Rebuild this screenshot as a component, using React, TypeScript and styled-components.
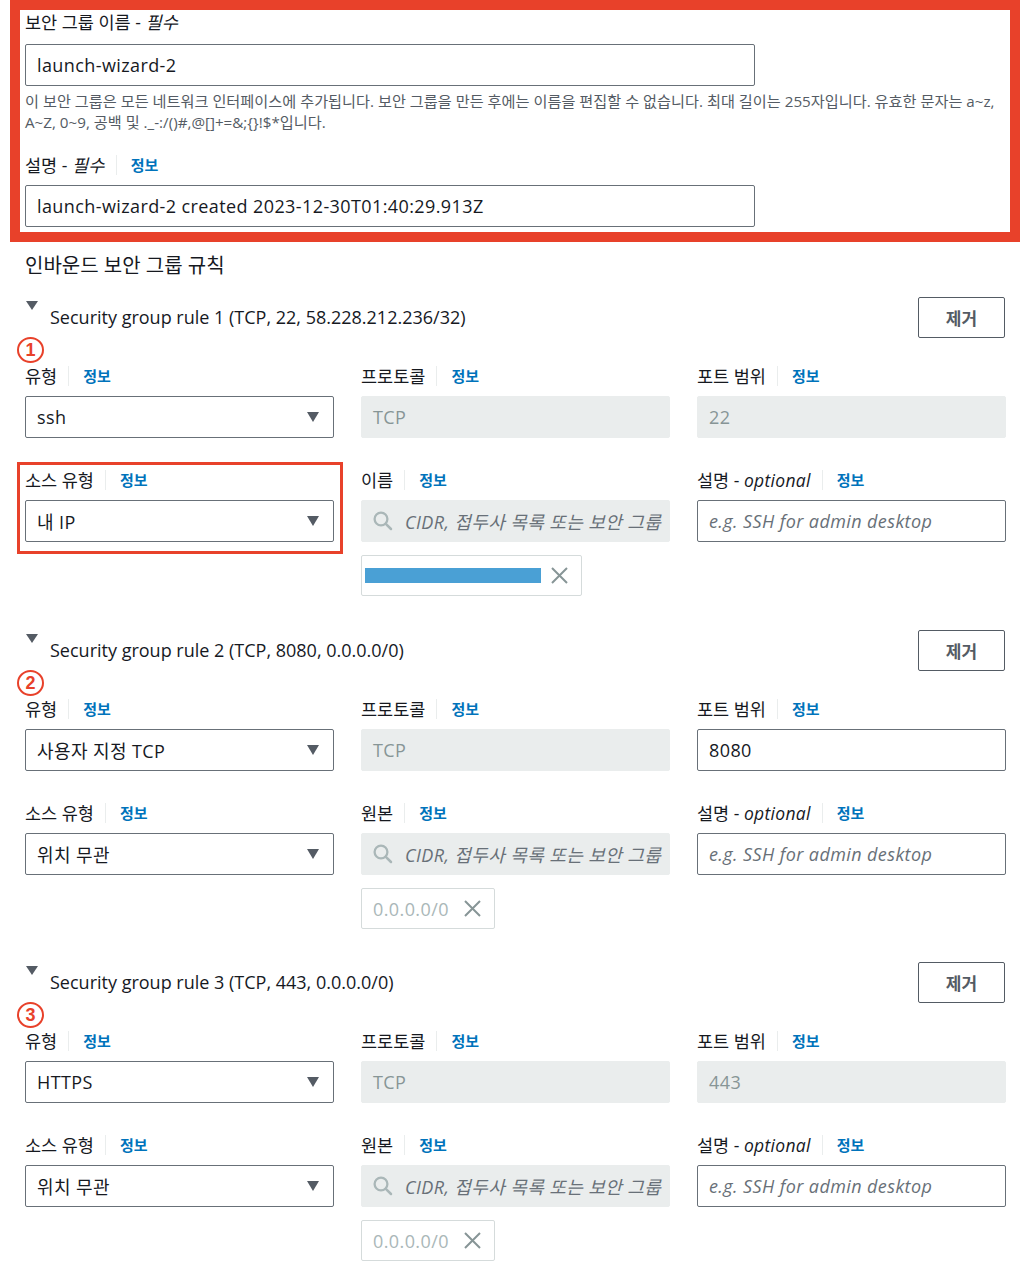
import React from "react";
import styled, { createGlobalStyle, css } from "styled-components";

const FONT = `"Open Sans", "Noto Sans CJK KR", sans-serif`;
const RED = "#e8412a";

const GlobalStyle = createGlobalStyle`
  html, body { margin: 0; padding: 0; background: #fff; }
  body { font-family: ${FONT}; color: #16191f; }
  * { box-sizing: border-box; }
`;

const Page = styled.div`
  width: 1028px;
  padding: 0 0 16px 0;
`;

const RequiredFrame = styled.section`
  margin: 0 8px 0 10px;
  border: 10px solid ${RED};
  padding: 2px 5px 5px 5px;
`;

const LabelRow = styled.div<{ $mt?: number }>`
  display: flex;
  align-items: center;
  height: 20px;
  margin-top: ${(p) => p.$mt ?? 0}px;
  font-size: 17.5px;
  line-height: 20px;
  color: #16191f;
  white-space: nowrap;
`;

const Em = styled.span`
  font-style: italic;
  letter-spacing: 0.3px;
`;

const InfoLink = styled.span`
  display: inline-flex;
  align-items: center;
  margin-left: 11px;
  padding-left: 14px;
  border-left: 1px solid #eaeded;
  height: 20px;
  font-size: 15px;
  font-weight: 700;
  color: #0073bb;
`;

const boxBase = css`
  display: flex;
  align-items: center;
  height: 42px;
  padding: 0 11px;
  border-radius: 2px;
  font-size: 18px;
  letter-spacing: 0.4px;
  white-space: nowrap;
  overflow: hidden;
`;

const TextInput = styled.div<{ $width?: number; $mt?: number }>`
  ${boxBase};
  width: ${(p) => (p.$width ? `${p.$width}px` : "100%")};
  margin-top: ${(p) => p.$mt ?? 10}px;
  border: 1px solid #687078;
  color: #16191f;
`;

const Placeholder = styled.span`
  font-style: italic;
  color: #687078;
`;

const DisabledInput = styled.div`
  ${boxBase};
  margin-top: 10px;
  background: #eaeded;
  border: 1px solid #eaeded;
  color: #879596;
`;

const SearchBox = styled(DisabledInput)`
  gap: 12px;
`;

const IconSlot = styled.span`
  display: flex;
  flex-shrink: 0;
`;

const SelectBox = styled(TextInput)`
  justify-content: space-between;
`;

const Caret = styled.span`
  width: 0;
  height: 0;
  margin-right: 3px;
  border-left: 6px solid transparent;
  border-right: 6px solid transparent;
  border-top: 10px solid #545b64;
`;

const HelpText = styled.p`
  margin: 5px 0 0 0;
  font-size: 15.2px;
  line-height: 21px;
  color: #545b64;
  white-space: nowrap;
`;

const SectionTitle = styled.h2`
  margin: 12px 0 0 25px;
  font-size: 20px;
  line-height: 24px;
  font-weight: 400;
  color: #16191f;
`;

const RuleBlock = styled.section<{ $mt: number }>`
  margin: ${(p) => p.$mt}px 22px 0 25px;
`;

const RuleHeader = styled.div`
  display: flex;
  justify-content: space-between;
  align-items: flex-start;
  height: 41px;
`;

const RuleTitleWrap = styled.div`
  display: flex;
  align-items: flex-start;
  gap: 12px;
  margin-top: 4px;
`;

const Expander = styled.span`
  width: 0;
  height: 0;
  margin-left: 1px;
  border-left: 6px solid transparent;
  border-right: 6px solid transparent;
  border-top: 9px solid #545b64;
`;

const RuleTitle = styled.span`
  margin-top: 4px;
  font-size: 18px;
  line-height: 24px;
  color: #16191f;
`;

const RemoveButton = styled.button`
  width: 87px;
  height: 41px;
  margin-right: 1px;
  border: 1px solid #545b64;
  border-radius: 2px;
  background: #fff;
  font-family: ${FONT};
  font-size: 17px;
  font-weight: 700;
  color: #545b64;
`;

const StepBadge = styled.div`
  width: 27px;
  height: 26px;
  margin: -1px 0 3px -8px;
  border: 2.6px solid ${RED};
  border-radius: 50%;
  display: flex;
  align-items: center;
  justify-content: center;
  font-family: "Liberation Sans", sans-serif;
  font-size: 18px;
  font-weight: 600;
  line-height: 1;
  color: ${RED};
`;

const FieldGrid = styled.div`
  display: grid;
  grid-template-columns: 309px 309px 309px;
  column-gap: 27px;
  row-gap: 32px;
  align-items: start;
`;

const Field = styled.div<{ $highlight?: boolean }>`
  position: relative;
  ${(p) =>
    p.$highlight &&
    css`
      &::after {
        content: "";
        position: absolute;
        left: -8px;
        right: -9px;
        top: -8px;
        bottom: -12px;
        border: 3px solid ${RED};
        pointer-events: none;
      }
    `}
`;

const Chip = styled.div<{ $width: number }>`
  display: flex;
  align-items: center;
  justify-content: space-between;
  width: ${(p) => p.$width}px;
  height: 41px;
  margin-top: 13px;
  padding: 0 12px 0 11px;
  border: 1px solid #d5dbdb;
  border-radius: 2px;
  font-size: 18px;
  letter-spacing: 0.4px;
  color: #aab7b8;
`;

const RedactedBar = styled.span`
  display: block;
  width: 176px;
  height: 15px;
  margin-left: -8px;
  background: #4aa0d5;
`;

const SearchIcon = () => (
  <IconSlot>
    <svg width="20" height="20" viewBox="0 0 20 20" fill="none">
      <circle cx="8" cy="8" r="6.4" stroke="#aab7b8" strokeWidth="2.3" />
      <line x1="12.8" y1="12.8" x2="18" y2="18" stroke="#aab7b8" strokeWidth="2.5" strokeLinecap="round" />
    </svg>
  </IconSlot>
);

const CloseIcon = () => (
  <IconSlot>
    <svg width="19" height="19" viewBox="0 0 19 19" fill="none">
      <path d="M2 2 L17 17 M17 2 L2 17" stroke="#879596" strokeWidth="2" />
    </svg>
  </IconSlot>
);

type Rule = {
  n: string;
  title: string;
  type: string;
  protocol: string;
  port: string;
  portEditable: boolean;
  sourceType: string;
  sourceLabel: string;
  highlight: boolean;
  redacted: boolean;
  mt: number;
};

const rules: Rule[] = [
  {
    n: "1",
    title: "Security group rule 1 (TCP, 22, 58.228.212.236/32)",
    type: "ssh",
    protocol: "TCP",
    port: "22",
    portEditable: false,
    sourceType: "내 IP",
    sourceLabel: "이름",
    highlight: true,
    redacted: true,
    mt: 19,
  },
  {
    n: "2",
    title: "Security group rule 2 (TCP, 8080, 0.0.0.0/0)",
    type: "사용자 지정 TCP",
    protocol: "TCP",
    port: "8080",
    portEditable: true,
    sourceType: "위치 무관",
    sourceLabel: "원본",
    highlight: false,
    redacted: false,
    mt: 34,
  },
  {
    n: "3",
    title: "Security group rule 3 (TCP, 443, 0.0.0.0/0)",
    type: "HTTPS",
    protocol: "TCP",
    port: "443",
    portEditable: false,
    sourceType: "위치 무관",
    sourceLabel: "원본",
    highlight: false,
    redacted: false,
    mt: 33,
  },
];

const Label = ({ children }: { children: React.ReactNode }) => (
  <LabelRow>
    <span>{children}</span>
    <InfoLink>정보</InfoLink>
  </LabelRow>
);

const RuleSection = ({ r }: { r: Rule }) => (
  <RuleBlock $mt={r.mt}>
    <RuleHeader>
      <RuleTitleWrap>
        <Expander />
        <RuleTitle>{r.title}</RuleTitle>
      </RuleTitleWrap>
      <RemoveButton>제거</RemoveButton>
    </RuleHeader>
    <StepBadge>{r.n}</StepBadge>
    <FieldGrid>
      <Field>
        <Label>유형</Label>
        <SelectBox>
          <span>{r.type}</span>
          <Caret />
        </SelectBox>
      </Field>
      <Field>
        <Label>프로토콜</Label>
        <DisabledInput>{r.protocol}</DisabledInput>
      </Field>
      <Field>
        <Label>포트 범위</Label>
        {r.portEditable ? <TextInput>{r.port}</TextInput> : <DisabledInput>{r.port}</DisabledInput>}
      </Field>
      <Field $highlight={r.highlight}>
        <Label>소스 유형</Label>
        <SelectBox>
          <span>{r.sourceType}</span>
          <Caret />
        </SelectBox>
      </Field>
      <Field>
        <Label>{r.sourceLabel}</Label>
        <SearchBox>
          <SearchIcon />
          <Placeholder>CIDR, 접두사 목록 또는 보안 그룹</Placeholder>
        </SearchBox>
        {r.redacted ? (
          <Chip $width={221}>
            <RedactedBar />
            <CloseIcon />
          </Chip>
        ) : (
          <Chip $width={134}>
            <span>0.0.0.0/0</span>
            <CloseIcon />
          </Chip>
        )}
      </Field>
      <Field>
        <LabelRow>
          <span>
            설명 - <Em>optional</Em>
          </span>
          <InfoLink>정보</InfoLink>
        </LabelRow>
        <TextInput>
          <Placeholder>e.g. SSH for admin desktop</Placeholder>
        </TextInput>
      </Field>
    </FieldGrid>
  </RuleBlock>
);

export default function App() {
  return (
    <Page>
      <GlobalStyle />
      <RequiredFrame>
        <LabelRow>
          <span>
            보안 그룹 이름 - <Em>필수</Em>
          </span>
        </LabelRow>
        <TextInput $width={730} $mt={12}>
          launch-wizard-2
        </TextInput>
        <HelpText>
          이 보안 그룹은 모든 네트워크 인터페이스에 추가됩니다. 보안 그룹을 만든 후에는 이름을 편집할 수 없습니다. 최대 길이는
          255자입니다. 유효한 문자는 a~z,
          <br />
          A~Z, 0~9, 공백 및 ._-:/()#,@[]+=&;{"{}"}!$*입니다.
        </HelpText>
        <LabelRow $mt={22}>
          <span>
            설명 - <Em>필수</Em>
          </span>
          <InfoLink>정보</InfoLink>
        </LabelRow>
        <TextInput $width={730} $mt={10}>
          launch-wizard-2 created 2023-12-30T01:40:29.913Z
        </TextInput>
      </RequiredFrame>
      <SectionTitle>인바운드 보안 그룹 규칙</SectionTitle>
      {rules.map((r) => (
        <RuleSection key={r.n} r={r} />
      ))}
    </Page>
  );
}
